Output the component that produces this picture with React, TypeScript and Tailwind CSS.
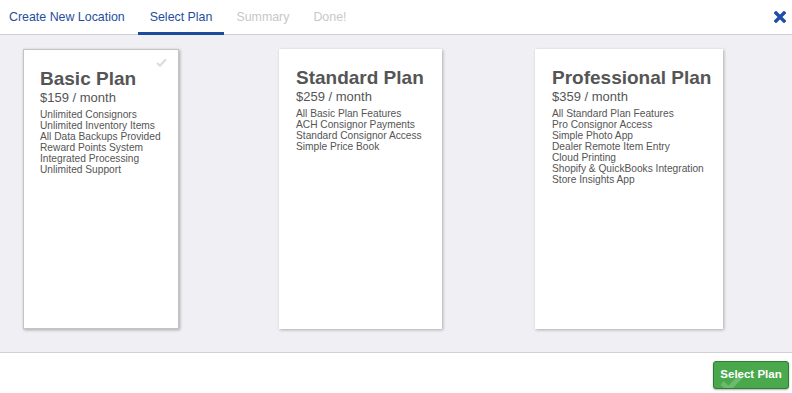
import React from 'react';

const plans = [
  {
    name: 'Basic Plan',
    price: '$159 / month',
    width: 'w-[156px]',
    selected: true,
    features: [
      'Unlimited Consignors',
      'Unlimited Inventory Items',
      'All Data Backups Provided',
      'Reward Points System',
      'Integrated Processing',
      'Unlimited Support',
    ],
  },
  {
    name: 'Standard Plan',
    price: '$259 / month',
    width: 'w-[163px]',
    selected: false,
    features: [
      'All Basic Plan Features',
      'ACH Consignor Payments',
      'Standard Consignor Access',
      'Simple Price Book',
    ],
  },
  {
    name: 'Professional Plan',
    price: '$359 / month',
    width: 'w-[188px]',
    selected: false,
    features: [
      'All Standard Plan Features',
      'Pro Consignor Access',
      'Simple Photo App',
      'Dealer Remote Item Entry',
      'Cloud Printing',
      'Shopify & QuickBooks Integration',
      'Store Insights App',
    ],
  },
];

function Check({ className }: { className?: string }) {
  return (
    <svg viewBox="0 0 12 10" className={className}>
      <path d="M1 5.5 L4.3 8.5 L11 1.5" fill="none" stroke="currentColor" strokeWidth="2.4" />
    </svg>
  );
}

export default function App() {
  return (
    <div className="w-[792px] h-[393px] flex flex-col bg-white font-['Liberation_Sans',Arial,sans-serif]">
      {/* tabs */}
      <div className="h-[35px] flex items-stretch border-b border-[#cfcfd4]">
        <div className="flex items-center pl-[9px] pr-[13px] text-[12.4px] text-[#1f4e9e]">Create New Location</div>
        <div className="flex items-center px-[12px] text-[12.4px] text-[#1f4e9e] border-b-[3px] border-[#1c4a9c] mb-[-1px] pt-[3px]">
          Select Plan
        </div>
        <div className="flex items-center px-[12px] text-[12.4px] text-[#c8c8c8]">Summary</div>
        <div className="flex items-center px-[12px] text-[12.4px] text-[#c8c8c8]">Done!</div>
        <div className="ml-auto flex items-center pr-[6px]">
          <svg viewBox="0 0 12 12" className="w-[12px] h-[12px] text-[#1f4fa8]">
            <path d="M2 2 L10 10 M10 2 L2 10" stroke="currentColor" strokeWidth="3.4" strokeLinecap="square" />
          </svg>
        </div>
      </div>

      {/* plan cards */}
      <div className="flex-1 bg-[#efeff4] flex pl-[23px] pt-[14px] border-b border-[#cfcfd4]">
        {plans.map((p) => (
          <div key={p.name} className="w-[256px]">
            <div
              className={`${p.width} h-[280px] bg-white relative pt-[17px] text-[#555] ${
                p.selected
                  ? 'pl-[16px] border border-[#c4c4c4] shadow-[1px_1px_3px_rgba(0,0,0,0.3)]'
                  : 'pl-[17px] shadow-[1px_1px_3px_rgba(0,0,0,0.28)]'
              }`}
            >
              {p.selected && <Check className="absolute right-[11px] top-[8px] w-[11px] h-[9px] text-[#dcdcdc]" />}
              <div className="text-[19px] font-bold leading-[23px] text-[#555]">{p.name}</div>
              <div className="text-[13px] leading-[16px] text-[#555] mb-[3px]">{p.price}</div>
              {p.features.map((f) => (
                <div key={f} className="text-[10.2px] leading-[11px] text-[#555]">
                  {f}
                </div>
              ))}
            </div>
          </div>
        ))}
      </div>

      {/* footer */}
      <div className="h-[40px] flex items-center justify-end pr-[3px]">
        <button className="relative h-[28px] w-[76px] mt-[3px] rounded-[3px] bg-[#4aa84d] border border-[#2f7d32] text-white text-[11.5px] font-bold overflow-hidden shadow-[0_1px_2px_rgba(0,0,0,0.3)]">
          <Check className="absolute left-[6px] top-[10px] w-[24px] h-[20px] text-white opacity-20" />
          <span className="relative">Select Plan</span>
        </button>
      </div>
    </div>
  );
}
